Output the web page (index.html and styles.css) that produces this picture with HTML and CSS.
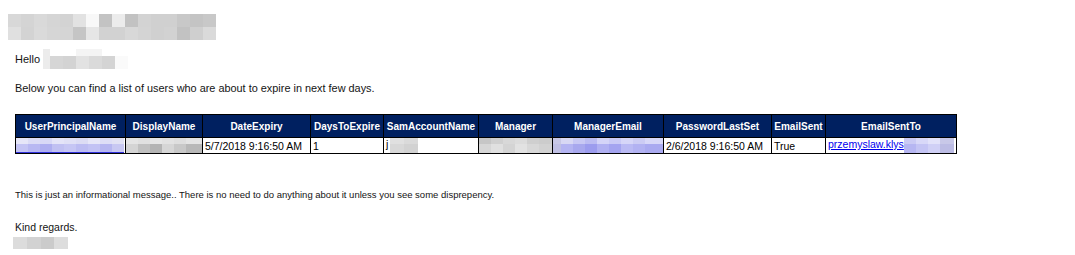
FILE: index.html
```html
<!DOCTYPE html>
<html lang="en">

<head>
    <meta charset="UTF-8">
    <meta name="viewport" content="width=device-width, initial-scale=1.0">
    <title>Password expiry report</title>
    <link rel="stylesheet" href="styles.css">
</head>

<body>
    <section class="mail">
        <div class="pix pixTitle"></div>
        <div class="hello">Hello <span class="pix pixName"></span></div>
        <p class="intro">Below you can find a list of users who are about to expire in next few days.</p>
        <table class="report">
            <colgroup>
                <col style="width: 110px">
                <col style="width: 77px">
                <col style="width: 108px">
                <col style="width: 73px">
                <col style="width: 95px">
                <col style="width: 74px">
                <col style="width: 111px">
                <col style="width: 108px">
                <col style="width: 54px">
                <col style="width: 131px">
            </colgroup>
            <thead>
                <tr>
                    <th>UserPrincipalName</th>
                    <th>DisplayName</th>
                    <th>DateExpiry</th>
                    <th>DaysToExpire</th>
                    <th>SamAccountName</th>
                    <th>Manager</th>
                    <th>ManagerEmail</th>
                    <th>PasswordLastSet</th>
                    <th>EmailSent</th>
                    <th>EmailSentTo</th>
                </tr>
            </thead>
            <tbody>
                <tr>
                    <td class="blurCell"><span class="pix pixUpn"></span></td>
                    <td class="blurCell"><span class="pix pixDisplay"></span></td>
                    <td>5/7/2018 9:16:50 AM</td>
                    <td>1</td>
                    <td>j<span class="pix pixSam"></span></td>
                    <td class="blurCell"><span class="pix pixManager"></span></td>
                    <td class="blurCell"><span class="pix pixMgrMail"></span></td>
                    <td>2/6/2018 9:16:50 AM</td>
                    <td>True</td>
                    <td><a href="#" class="mailLink">przemyslaw.klys</a><span class="pix pixSentTo"></span></td>
                </tr>
            </tbody>
        </table>
        <p class="note">This is just an informational message.. There is no need to do anything about it unless you see some disprepency.</p>
        <p class="regards">Kind regards.</p>
        <div class="pix pixSign"></div>
    </section>
</body>

</html>
```

FILE: styles.css
```css
html {
    background-color: white;
}

body {
    margin: 0;
    color: rgb(20, 20, 20);
    font-family: "Liberation Sans", Arial, sans-serif;
    font-size: 10.5px;
}

.mail {
    padding: 14px 0 0 15px;
}

.mail p {
    margin: 0;
    line-height: 15px;
}

/* pixelated blur blocks (anonymised data) */
.pix {
    display: inline-block;
    vertical-align: top;
}

.pixTitle {
    display: block;
    margin-left: -7px;
    width: 208px;
    height: 26px;
    background:
        linear-gradient(90deg, #d8d8d8 0 13px, #d4d4d4 13px 26px, #d9d9d9 26px 39px, #d5d5d5 39px 52px, #d3d3d3 52px 65px, #e2e2e2 65px 78px, #f8f8f8 78px 91px, #c3c3c3 91px 104px, #ececec 104px 117px, #c2c2c2 117px 130px, #d3d3d3 130px 143px, #d0d0d0 143px 156px, #d0d0d0 156px 169px, #c8c8c8 169px 182px, #c4c4c4 182px 195px, #c8c8c8 195px 208px) top / 100% 13px no-repeat,
        linear-gradient(90deg, #e0e0e0 0 13px, #d3d3d3 13px 26px, #dadada 26px 39px, #d6d6d6 39px 52px, #d5d5d5 52px 65px, #c5c5c5 65px 78px, #e6e6e6 78px 91px, #d2d2d2 91px 104px, #d2d2d2 104px 117px, #d8d8d8 117px 130px, #d4d4d4 130px 143px, #d0d0d0 143px 156px, #d2d2d2 156px 169px, #c2c2c2 169px 182px, #cfcfcf 182px 195px, #dadada 195px 208px) bottom / 100% 13px no-repeat;
}

.hello {
    display: flex;
    align-items: center;
    margin-top: 9px;
    height: 20px;
    font-size: 11px;
}

.pixName {
    margin-left: 3px;
    width: 85px;
    height: 20px;
    background:
        linear-gradient(90deg, #ececec 0 7px, #fff 7px 33px, #f4f4f4 33px 59px, #fff 59px 85px) top / 100% 7px no-repeat,
        linear-gradient(90deg, #ececec 0 7px, #d6d6d6 7px 20px, #d3d3d3 20px 33px, #e2e2e2 33px 46px, #dadada 46px 59px, #d4d4d4 59px 72px, #fafafa 72px 85px) bottom / 100% 13px no-repeat;
}

.intro {
    margin-top: 12px !important;
    font-size: 10.9px;
}

.report {
    margin-top: 18px;
    border-collapse: collapse;
    table-layout: fixed;
    width: 942px;
    border: 1px solid black;
}

.report th {
    height: 22px;
    padding: 0;
    background-color: rgb(0, 32, 96);
    color: white;
    font-size: 10px;
    font-weight: bold;
    text-align: center;
    white-space: nowrap;
    border: 1px solid black;
}

.report td {
    height: 15px;
    padding: 0 0 0 2px;
    color: black;
    font-size: 10.5px;
    white-space: nowrap;
    overflow: hidden;
    border: 1px solid black;
    vertical-align: middle;
}

.report td.blurCell {
    padding: 0;
}

.pixUpn {
    width: 108px;
    height: 14px;
    background:
        linear-gradient(90deg, #e6e6f8 0 12px, #dcdcf6 12px 24px, #d8d8f6 24px 36px, #e4e4f8 36px 48px, #e0e0f6 48px 60px, #dcdcf4 60px 72px, #e6e6f8 72px 84px, #dedef6 84px 96px, #e2e2f4 96px 108px) top / 100% 6px no-repeat,
        linear-gradient(90deg, #c4c4f4 0 12px, #b8b8f2 12px 24px, #aeaef0 24px 36px, #c0c0f2 36px 48px, #c6c6f4 48px 60px, #bcbcf2 60px 72px, #c2c2f4 72px 84px, #b6b6f0 84px 96px, #c8c8f2 96px 108px) bottom / 100% 8px no-repeat;
    border-bottom: 1px solid #3333dd;
}

.pixDisplay {
    width: 77px;
    height: 15px;
    background:
        linear-gradient(90deg, #e4e4e4 0 12px, #e0e0e0 12px 24px, #e6e6e6 24px 36px, #e2e2e2 36px 48px, #dedede 48px 60px, #e4e4e4 60px 77px) top / 100% 6px no-repeat,
        linear-gradient(90deg, #d4d4d4 0 12px, #c0c0c0 12px 24px, #b4b4b4 24px 36px, #d6d6d6 36px 48px, #c8c8c8 48px 60px, #b8b8b8 60px 77px) bottom / 100% 9px no-repeat;
}

.pixSam {
    margin-left: 2px;
    width: 28px;
    height: 15px;
    background:
        linear-gradient(90deg, #e0e0e0 0 14px, #dadada 14px 28px) top / 100% 6px no-repeat,
        linear-gradient(90deg, #d8d8d8 0 14px, #d2d2d2 14px 28px) bottom / 100% 9px no-repeat;
}

.pixManager {
    width: 74px;
    height: 15px;
    background:
        linear-gradient(90deg, #c6c6c6 0 12px, #d0d0d0 12px 24px, #d8d8d8 24px 36px, #dcdcdc 36px 48px, #cfcfcf 48px 60px, #cccccc 60px 74px) top / 100% 6px no-repeat,
        linear-gradient(90deg, #d6d6d6 0 12px, #e0e0e0 12px 24px, #d4d4d4 24px 36px, #e2e2e2 36px 48px, #d8d8d8 48px 60px, #d2d2d2 60px 74px) bottom / 100% 9px no-repeat;
}

.pixMgrMail {
    width: 110px;
    height: 15px;
    background:
        linear-gradient(90deg, #c8c8e6 0 8px, #d8d8f4 8px 20px, #c8c8f4 20px 32px, #bcbcf2 32px 44px, #d4d4f8 44px 56px, #cacaf6 56px 68px, #d6d6f8 68px 80px, #ccccf4 80px 92px, #d8d8f8 92px 110px) top / 100% 6px no-repeat,
        linear-gradient(90deg, #c0c0e4 0 8px, #b4b4f2 8px 20px, #a8a8ee 20px 32px, #9c9cee 32px 44px, #b0b0f2 44px 56px, #a4a4f0 56px 68px, #babaf4 68px 80px, #b2b2f2 80px 92px, #aaaaf0 92px 110px) bottom / 100% 9px no-repeat;
}

.mailLink {
    color: rgb(0, 0, 238);
    text-decoration: underline;
}

.pixSentTo {
    width: 50px;
    height: 15px;
    background:
        linear-gradient(90deg, #cacaf4 0 12px, #d8d8f8 12px 24px, #e2e2fa 24px 36px, #c8c8e8 36px 50px) top / 100% 6px no-repeat,
        linear-gradient(90deg, #b6b6f2 0 12px, #c4c4f4 12px 24px, #d0d0f6 24px 36px, #bcbce4 36px 50px) bottom / 100% 9px no-repeat;
}

.note {
    margin-top: 33px !important;
    font-size: 9.5px;
}

.regards {
    margin-top: 18px !important;
    font-size: 10.5px;
}

.pixSign {
    display: block;
    margin: 2px 0 0 -2px;
    width: 55px;
    height: 12px;
    background: linear-gradient(90deg, #dcdcdc 0 14px, #d2d2d2 14px 28px, #cbcbcb 28px 41px, #dddddd 41px 55px);
}
```
